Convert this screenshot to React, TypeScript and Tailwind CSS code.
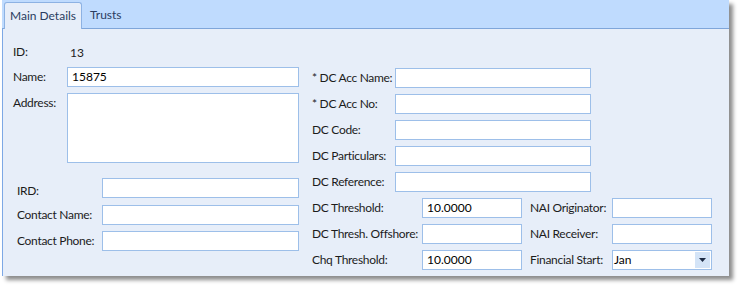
import React from "react";

const font = "font-['Lato','Noto_Sans',sans-serif]";

function Box({ w, tall, value }: { w: string; tall?: boolean; value?: string }) {
  return (
    <div
      className={`${w} ${tall ? "h-[70px]" : "h-[20px]"} shrink-0 border border-[#9dbfe9] bg-white px-[4px] leading-[18px] text-[12px] text-black`}
    >
      {value}
    </div>
  );
}

function Row({ label, labelW, children }: { label: string; labelW: string; children: React.ReactNode }) {
  return (
    <div className="flex items-start">
      <div
        className={`${labelW} shrink-0 whitespace-nowrap pt-[2px] leading-[16px] text-[12px] tracking-[-0.3px] text-[#1c1c1c]`}
      >
        {label}
      </div>
      {children}
    </div>
  );
}

export default function App() {
  return (
    <div className={`${font} h-[285px] w-[738px] bg-white`}>
      <div className="ml-[2px] flex h-[276px] w-[727px] flex-col shadow-[4px_4px_4px_rgba(0,0,0,0.45)]">
        {/* tab strip */}
        <div className="flex h-[29px] shrink-0 items-end border-b border-[#7fa6da] bg-[#bfdbfe] pl-[2px]">
          <div className="-mb-[1px] flex h-[27px] w-[78px] items-center justify-center whitespace-nowrap rounded-t-[3px] border border-b-0 border-[#8db2e3] bg-[#e7eef9] text-[12px] text-[#2a3d61]">
            Main Details
          </div>
          <div className="flex h-[27px] items-center pl-[8px] text-[12px] text-[#2a3d61]">Trusts</div>
        </div>

        {/* content */}
        <div className="flex flex-1 border-l border-[#7da8e5] bg-[#e7eef9] pl-[10px] pt-[13px]">
          {/* left column */}
          <div className="flex w-[286px] shrink-0 flex-col gap-[6px]">
            <Row label="ID:" labelW="w-[54px]">
              <div className="pl-[3px] pt-[3px] leading-[16px] text-[12px] text-[#1c1c1c]">13</div>
            </Row>
            <Row label="Name:" labelW="w-[54px]">
              <Box w="w-[232px]" value="15875" />
            </Row>
            <Row label="Address:" labelW="w-[54px]">
              <Box w="w-[232px]" tall />
            </Row>
            <div className="mt-[9px] flex flex-col gap-[6px] pl-[4px]">
              <Row label="IRD:" labelW="w-[85px] pt-[5px]">
                <Box w="w-[197px]" />
              </Row>
              <Row label="Contact Name:" labelW="w-[85px]">
                <Box w="w-[197px]" />
              </Row>
              <Row label="Contact Phone:" labelW="w-[85px]">
                <Box w="w-[197px]" />
              </Row>
            </div>
          </div>

          {/* right column */}
          <div className="ml-[13px] mt-[26px] flex flex-col gap-[6px]">
            <Row label="* DC Acc Name:" labelW="w-[83px]">
              <Box w="w-[196px]" />
            </Row>
            <Row label="* DC Acc No:" labelW="w-[83px]">
              <Box w="w-[196px]" />
            </Row>
            <Row label="DC Code:" labelW="w-[83px]">
              <Box w="w-[196px]" />
            </Row>
            <Row label="DC Particulars:" labelW="w-[83px]">
              <Box w="w-[196px]" />
            </Row>
            <Row label="DC Reference:" labelW="w-[83px]">
              <Box w="w-[196px]" />
            </Row>
            <div className="flex items-start">
              <Row label="DC Threshold:" labelW="w-[110px]">
                <Box w="w-[100px]" value="10.0000" />
              </Row>
              <div className="ml-[8px]">
                <Row label="NAI Originator:" labelW="w-[82px]">
                  <Box w="w-[100px]" />
                </Row>
              </div>
            </div>
            <div className="flex items-start">
              <Row label="DC Thresh. Offshore:" labelW="w-[110px]">
                <Box w="w-[100px]" />
              </Row>
              <div className="ml-[8px]">
                <Row label="NAI Receiver:" labelW="w-[82px]">
                  <Box w="w-[100px]" />
                </Row>
              </div>
            </div>
            <div className="flex items-start">
              <Row label="Chq Threshold:" labelW="w-[110px]">
                <Box w="w-[100px]" value="10.0000" />
              </Row>
              <div className="ml-[8px]">
                <Row label="Financial Start:" labelW="w-[82px]">
                  <div className="flex h-[20px] w-[100px] items-stretch border border-[#9dbfe9] bg-white">
                    <div className="flex-1 pl-[1px] leading-[18px] text-[12px] text-black">Jan</div>
                    <div className="m-[1px] flex w-[15px] items-center justify-center bg-[#d4e4f7]">
                      <svg width="7" height="4" viewBox="0 0 7 4">
                        <path d="M0 0h7L3.5 4z" fill="#1b2a44" />
                      </svg>
                    </div>
                  </div>
                </Row>
              </div>
            </div>
          </div>
        </div>
      </div>
    </div>
  );
}
